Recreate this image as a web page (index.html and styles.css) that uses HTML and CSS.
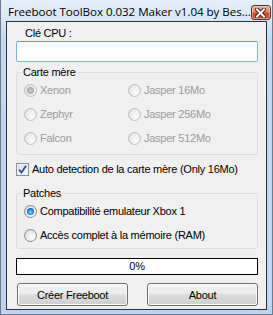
FILE: index.html
```html
<!DOCTYPE html>
<html>
<head>
<meta charset="utf-8">
<link rel="stylesheet" href="styles.css">
</head>
<body>
<div class="window">
  <div class="titlebar">
    <span class="title">Freeboot ToolBox 0.032 Maker v1.04 by Bes...</span>
    <div class="close">
      <svg width="11" height="10" viewBox="0 0 11 10">
        <path d="M2 1.5 L9 8.5 M9 1.5 L2 8.5" stroke="#4a2018" stroke-width="4" stroke-linecap="square"/>
        <path d="M2 1.5 L9 8.5 M9 1.5 L2 8.5" stroke="#ffffff" stroke-width="2" stroke-linecap="square"/>
      </svg>
    </div>
  </div>
  <div class="client">
    <div class="cpu-label">Clé CPU :</div>
    <div class="textbox"></div>

    <fieldset class="group group-board">
      <legend>Carte mère</legend>
      <div class="radio-grid">
        <label class="opt disabled"><span class="radio checked"></span>Xenon</label>
        <label class="opt disabled"><span class="radio"></span>Jasper 16Mo</label>
        <label class="opt disabled"><span class="radio"></span>Zephyr</label>
        <label class="opt disabled"><span class="radio"></span>Jasper 256Mo</label>
        <label class="opt disabled"><span class="radio"></span>Falcon</label>
        <label class="opt disabled"><span class="radio"></span>Jasper 512Mo</label>
      </div>
    </fieldset>

    <label class="check-row">
      <span class="checkbox">
        <svg width="9" height="9" viewBox="0 0 9 9">
          <path d="M1 4.5 L3.5 7.5 L8 0.8" stroke="#2b4f9c" stroke-width="1.8" fill="none"/>
        </svg>
      </span>
      Auto detection de la carte mère (Only 16Mo)
    </label>

    <fieldset class="group group-patch">
      <legend>Patches</legend>
      <div class="radio-col">
        <label class="opt"><span class="radio checked active"></span>Compatibilité emulateur Xbox 1</label>
        <label class="opt"><span class="radio active"></span>Accès complet à la mémoire (RAM)</label>
      </div>
    </fieldset>

    <div class="progress">0%</div>

    <div class="buttons">
      <button class="btn">Créer Freeboot</button>
      <button class="btn">About</button>
    </div>
  </div>
</div>
</body>
</html>
```

FILE: styles.css
```css
* { box-sizing: border-box; }
html, body { margin: 0; padding: 0; }
body {
  width: 273px;
  height: 315px;
  overflow: hidden;
  background: #c9dbf0;
  font-family: "Liberation Sans", Arial, sans-serif;
  font-size: 11px;
  letter-spacing: -0.25px;
  color: #000;
}
.window {
  width: 273px;
  height: 315px;
  display: flex;
  flex-direction: column;
  padding: 0 5px 4px 5px;
  border-left: 1px solid #6e7b8b;
  border-right: 1px solid #6e7b8b;
  border-bottom: 1px solid #6e7b8b;
  background: linear-gradient(#e6eef8 0px, #d8e6f5 21px, #c3d7ef 40px, #bfd4ee 100%);
}
.titlebar {
  height: 21px;
  display: flex;
  align-items: flex-start;
}
.title {
  flex: none;
  margin-left: 2px;
  padding-top: 4px;
  font-family: "Open Sans", "Noto Sans", sans-serif;
  font-size: 11.6px;
  letter-spacing: -0.05px;
  line-height: 15px;
  white-space: nowrap;
  color: #000;
}
.close {
  width: 21px;
  height: 15px;
  margin-top: 5px;
  margin-left: auto;
  margin-right: -4px;
  border: 1px solid #5a3229;
  border-radius: 3px;
  background: linear-gradient(#eba898 0%, #dd8a73 45%, #c94a2c 55%, #d2634a 100%);
  box-shadow: inset 0 0 0 1px rgba(255,255,255,0.35);
  display: flex;
  align-items: center;
  justify-content: center;
}
.close svg { display: block; }
.client {
  flex: 1;
  border: 1px solid #2d333c;
  background: #f0f0f0;
  padding: 0 8px 0 9px;
  display: flex;
  flex-direction: column;
}
.cpu-label {
  margin-top: 5px;
  margin-left: 9px;
  height: 13px;
  line-height: 13px;
}
.textbox {
  margin-top: 1px;
  height: 21px;
  background: #fff;
  border: 1px solid #7eb4ea;
  border-top-color: #569de5;
  border-radius: 2px;
}
.group {
  margin: 0;
  padding: 0;
  border: 1px solid #d5dfe5;
  border-radius: 3px;
  min-width: 0;
}
.group legend {
  margin-left: 5px;
  padding: 0 2px 0 1px;
  height: 13px;
  line-height: 13px;
  font-size: 11px;
}
.group-board {
  margin-top: 4px;
  height: 89px;
}
.radio-grid {
  display: grid;
  grid-template-columns: 104px 1fr;
  row-gap: 11px;
  padding: 5px 0 0 7px;
}
.radio-col {
  display: flex;
  flex-direction: column;
  gap: 11px;
  padding: 5px 0 0 7px;
}
.opt {
  display: flex;
  align-items: center;
  height: 13px;
  line-height: 13px;
  white-space: nowrap;
}
.opt.disabled { color: #9c9c9c; }
.radio {
  position: relative;
  width: 13px;
  height: 13px;
  flex: none;
  margin-right: 3px;
  border-radius: 50%;
  border: 1px solid #bcbcbc;
  background: radial-gradient(circle at 65% 70%, #fbfbfb 0%, #eeeeee 45%, #dcdcdc 100%);
}
.radio.active {
  border-color: #8a8a8a;
  background: radial-gradient(circle at 65% 70%, #ffffff 0%, #ececec 45%, #cfcfcf 100%);
}
.radio.checked::after {
  content: "";
  position: absolute;
  left: 2px;
  top: 2px;
  width: 7px;
  height: 7px;
  border-radius: 50%;
  background: radial-gradient(circle at 50% 55%, #d2d2d2 0%, #a8a8a8 60%, #8c8c8c 100%);
}
.radio.checked.active::after {
  background: radial-gradient(circle at 50% 60%, #8fd6ff 0%, #2b8ee0 45%, #0d4f9e 85%, #0a3a7a 100%);
}
.check-row {
  margin-top: 8px;
  display: flex;
  align-items: center;
  height: 13px;
  line-height: 13px;
  white-space: nowrap;
}
.checkbox {
  width: 13px;
  height: 13px;
  flex: none;
  margin-right: 3px;
  border: 1px solid #8e8f8f;
  background: linear-gradient(135deg, #d4dbe3 0%, #eef1f5 60%, #fafafa 100%);
  box-shadow: inset 0 0 0 1px #f4f4f4;
  display: flex;
  align-items: center;
  justify-content: center;
}
.checkbox svg { display: block; }
.group-patch {
  margin-top: 11px;
  height: 62px;
}
.progress {
  margin-top: 9px;
  height: 17px;
  border: 1px solid #000;
  background: #fff;
  text-align: center;
  line-height: 15px;
}
.buttons {
  margin-top: 8px;
  display: flex;
  justify-content: space-between;
  padding: 0 0 0 1px;
}
.btn {
  width: 111px;
  height: 23px;
  padding: 0;
  font-family: "Liberation Sans", Arial, sans-serif;
  font-size: 11px;
  letter-spacing: -0.25px;
  color: #000;
  border: 1px solid #707070;
  border-radius: 3px;
  background: linear-gradient(#f2f2f2 0%, #ebebeb 50%, #dddddd 50%, #cfcfcf 100%);
  box-shadow: inset 0 0 0 1px #fcfcfc;
}
```
